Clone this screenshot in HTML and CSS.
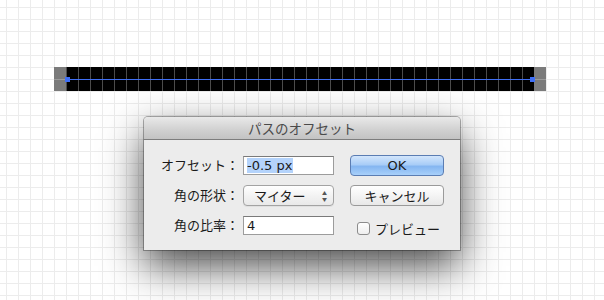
FILE: index.html
```html
<!DOCTYPE html>
<html lang="ja">
<head>
    <meta charset="UTF-8">
    <title>パスのオフセット</title>
    <link rel="stylesheet" href="styles.css">
</head>
<body>
    <div class="canvas">
        <div class="bar">
            <div class="cap"></div>
            <div class="fill">
                <div class="path"></div>
                <span class="handle left"></span>
                <span class="handle right"></span>
            </div>
            <div class="cap"></div>
        </div>

        <div class="dialog">
            <div class="titlebar">パスのオフセット</div>
            <form class="body" onsubmit="return false">
                <label class="label" for="offset">オフセット：</label>
                <div class="field"><span class="sel">-0.5 px</span></div>
                <button class="btn ok" type="submit">OK</button>

                <label class="label">角の形状：</label>
                <div class="select">
                    <span>マイター</span>
                    <span class="arrows">▲<br>▼</span>
                </div>
                <button class="btn" type="button">キャンセル</button>

                <label class="label" for="ratio">角の比率：</label>
                <div class="field">4</div>
                <label class="preview"><span class="check"></span>プレビュー</label>
            </form>
        </div>
    </div>
</body>
</html>
```
FILE: styles.css
```css
*{
    box-sizing: border-box;
}
body{
    margin: 0;
    font-family: "Noto Sans CJK JP", "DejaVu Sans", sans-serif;
    font-size: 13px;
    color: #1a1a1a;
}
.canvas{
    width: 604px;
    height: 300px;
    overflow: hidden;
    padding-top: 67px;
    background-color: #fff;
    background-image:
        linear-gradient(to right, #ececec 1px, transparent 1px),
        linear-gradient(to bottom, #ececec 1px, transparent 1px);
    background-size: 12px 12px;
    background-position: 6px 7px;
}
.bar{
    display: flex;
    margin-left: 54px;
    width: 492px;
    height: 24px;
}
.cap{
    width: 12px;
    background: linear-gradient(to bottom, #7b7b7b 12px, #9a9a9a 12px, #9a9a9a 13px, #7b7b7b 13px);
}
.fill{
    position: relative;
    flex: 1;
    background-color: #000;
    background-image: linear-gradient(to right, #4b4b4b 1px, transparent 1px);
    background-size: 12px 12px;
}
.path{
    margin-top: 12px;
    height: 1px;
    background: #3f6ff4;
}
.handle{
    position: absolute;
    top: 10px;
    width: 5px;
    height: 5px;
    background: #3f6ff4;
}
.handle.left{
    left: -1px;
}
.handle.right{
    right: -1px;
}

.dialog{
    margin: 26px 0 0 144px;
    width: 316px;
    height: 133px;
    background: #ececec;
    border-radius: 4px 4px 0 0;
    box-shadow: 0 16px 42px rgba(0,0,0,0.72), 0 0 0 1px rgba(0,0,0,0.3);
}
.titlebar{
    height: 23px;
    line-height: 22px;
    font-size: 13.5px;
    text-align: center;
    color: #4a4a4a;
    border-radius: 4px 4px 0 0;
    border-bottom: 1px solid #7d7d7d;
    background: linear-gradient(to bottom, #e9e9e9, #d0d0d0 60%, #c3c3c3);
}
.body{
    display: grid;
    grid-template-columns: 99px 91px 110px;
    grid-auto-rows: 21px;
    row-gap: 9px;
    padding-top: 15px;
    white-space: nowrap;
}
.body .btn{
    margin-left: 16px;
    width: 94px;
}
.label{
    text-align: right;
    padding-right: 4px;
    line-height: 20px;
}
.field{
    align-self: center;
    height: 19px;
    padding: 0 3px;
    line-height: 18px;
    font-family: "DejaVu Sans", sans-serif;
    font-size: 13px;
    background: #fff;
    border: 1px solid #9c9c9c;
    border-top-color: #7a7a7a;
}
.sel{
    background: #b4d3fb;
    padding-right: 1px;
}
.select{
    display: flex;
    justify-content: space-between;
    align-items: center;
    padding: 0 6px 0 10px;
    border: 1px solid #a3a3a3;
    border-radius: 4px;
    background: linear-gradient(to bottom, #fff, #f3f3f3 50%, #e9e9e9);
    box-shadow: 0 1px 0 rgba(0,0,0,0.05);
}
.arrows{
    font-size: 5px;
    line-height: 6px;
    color: #555;
}
.btn{
    height: 21px;
    padding: 0;
    font-family: "Noto Sans CJK JP", "DejaVu Sans", sans-serif;
    font-size: 13px;
    color: #1a1a1a;
    border: 1px solid #9a9a9a;
    border-radius: 4px;
    background: linear-gradient(to bottom, #fff, #f4f4f4 50%, #e8e8e8);
}
.btn.ok{
    font-family: "DejaVu Sans", sans-serif;
    border-color: #5b7db3;
    background: linear-gradient(to bottom, #d3e6fc, #a9cdf7 45%, #85b6f1 55%, #a8d0fa);
}
.preview{
    display: flex;
    align-items: center;
    gap: 5px;
    margin: 6px 0 0 23px;
    line-height: 14px;
    height: 15px;
}
.check{
    width: 13px;
    height: 13px;
    border: 1px solid #8c8c8c;
    border-radius: 3px;
    background: linear-gradient(to bottom, #fff, #eee);
}
```
